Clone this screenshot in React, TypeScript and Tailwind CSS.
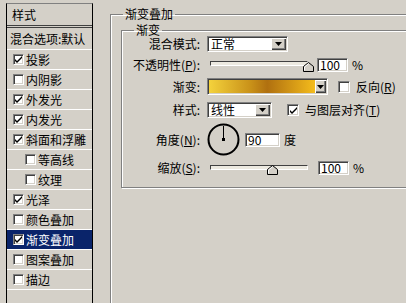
import React from "react";

const items = [
  { label: "投影", checked: true },
  { label: "内阴影", checked: false },
  { label: "外发光", checked: true },
  { label: "内发光", checked: true },
  { label: "斜面和浮雕", checked: true },
  { label: "等高线", checked: false, sub: true },
  { label: "纹理", checked: false, sub: true },
  { label: "光泽", checked: true },
  { label: "颜色叠加", checked: false },
  { label: "渐变叠加", checked: true, active: true },
  { label: "图案叠加", checked: false },
  { label: "描边", checked: false },
];

function Check({ checked, size = "w-[11px] h-[11px]" }: { checked: boolean; size?: string }) {
  return (
    <div
      className={`${size} shrink-0 bg-white border border-t-[#808080] border-l-[#808080] border-r-white border-b-white shadow-[inset_1px_1px_0_#404040,inset_-1px_-1px_0_#d4d0c8] flex items-center justify-center`}
    >
      {checked && (
        <svg width="7" height="7" viewBox="0 0 7 7">
          <path d="M0 3 L0 5 L2 7 L7 2 L7 0 L2 5 Z" fill="#000" />
        </svg>
      )}
    </div>
  );
}

function DropBtn({ w = "w-[15px]" }: { w?: string }) {
  return (
    <div className={`${w} h-full shrink-0 bg-[#d4d0c8] shadow-[inset_1px_1px_0_#fff,inset_-1px_-1px_0_#404040,inset_-2px_-2px_0_#808080] flex items-center justify-center`}>
      <svg width="7" height="4" viewBox="0 0 7 4">
        <path d="M0 0 H7 L3.5 4 Z" fill="#000" />
      </svg>
    </div>
  );
}

const sunken =
  "border border-t-[#808080] border-l-[#808080] border-r-white border-b-white shadow-[inset_1px_1px_0_#404040,inset_-1px_-1px_0_#d4d0c8]";

function Thumb() {
  return (
    <svg width="11" height="10" viewBox="0 0 11 10" className="absolute">
      <path d="M0.5 9.5 V4.5 L5.5 0.5 L10.5 4.5 V9.5 Z" fill="#d4d0c8" stroke="#000" />
      <path d="M1.5 8.5 V5 L5.5 1.8" fill="none" stroke="#fff" />
    </svg>
  );
}

function Label({ children }: { children: React.ReactNode }) {
  return <div className="w-[79px] shrink-0 text-right pr-[1px]">{children}</div>;
}

export default function App() {
  return (
    <div className="w-[406px] h-[303px] overflow-hidden bg-[#d4d0c8] flex text-[12px] leading-[14px] text-black font-['Noto_Sans_CJK_SC',sans-serif]">
      {/* styles list */}
      <div className="ml-[6px] mt-[3px] w-[87px] h-[310px] shrink-0 border-l border-r border-t border-l-black border-r-black border-t-[#808080]">
        <div className="h-[24px] border-b-[3px] border-double border-[#404040] flex items-center pl-[5px]">样式</div>
        <div className="h-[22px] border-b border-white flex items-center pl-[3px] whitespace-nowrap">混合选项:默认</div>
        {items.map((it) => (
          <div
            key={it.label}
            className={`h-[20px] border-b border-white flex items-center whitespace-nowrap ${it.sub ? "pl-[18px]" : "pl-[6px]"} ${it.active ? "bg-[#0a246a] text-white" : ""}`}
          >
            <Check checked={it.checked} />
            <span className="ml-[2px]">{it.label}</span>
          </div>
        ))}
      </div>

      {/* options */}
      <fieldset className="ml-[17px] mt-[7px] w-[320px] h-[320px] shrink-0 border border-[#808080] shadow-[inset_1px_1px_0_#fff,1px_1px_0_#fff]">
        <legend className="ml-[12px] px-[2px] h-[14px]">渐变叠加</legend>
        <fieldset className="ml-[10px] mt-[2px] w-[300px] pb-[12px] border border-[#808080] shadow-[inset_1px_1px_0_#fff,1px_1px_0_#fff]">
          <legend className="ml-[12px] px-[2px] h-[14px]">渐变</legend>

          <div className="mt-[-1px] h-[16px] flex items-center">
            <Label>混合模式:</Label>
            <div className={`ml-[6px] w-[81px] h-[16px] bg-white flex ${sunken} p-[1px]`}>
              <span className="flex-1 pl-[2px] leading-[12px]">正常</span>
              <DropBtn />
            </div>
          </div>

          <div className="mt-[6px] h-[14px] flex items-center">
            <Label>
              不透明性(<u>P</u>):
            </Label>
            <div className="ml-[9px] w-[104px] h-[14px] relative shrink-0">
              <div className="absolute left-0 top-[3px] w-[98px] h-[5px] border border-[#404040] border-b-white border-r-white bg-[#ece9e0]" />
              <div className="absolute left-[93px] top-[4px]">
                <Thumb />
              </div>
            </div>
            <div className={`ml-[3px] w-[31px] h-[14px] bg-white ${sunken} pl-[2px] leading-[12px]`}>100</div>
            <span className="ml-[4px]">%</span>
          </div>

          <div className="mt-[6px] h-[17px] flex items-center">
            <Label>渐变:</Label>
            <div className={`ml-[6px] w-[121px] h-[17px] flex ${sunken} p-[1px]`}>
              <div className="flex-1 bg-[linear-gradient(to_right,#f4d23c,#c89018_40%,#b07010_55%,#f4bc1c)]" />
              <DropBtn w="w-[11px]" />
            </div>
            <div className="ml-[10px]">
              <Check checked={false} size="w-[12px] h-[12px]" />
            </div>
            <span className="ml-[6px]">
              反向(<u>R</u>)
            </span>
          </div>

          <div className="mt-[7px] h-[16px] flex items-center">
            <Label>样式:</Label>
            <div className={`ml-[6px] w-[65px] h-[16px] bg-white flex ${sunken} p-[1px]`}>
              <span className="flex-1 pl-[2px] leading-[12px]">线性</span>
              <DropBtn />
            </div>
            <div className="ml-[15px]">
              <Check checked={true} size="w-[12px] h-[12px]" />
            </div>
            <span className="ml-[6px] whitespace-nowrap">
              与图层对齐(<u>T</u>)
            </span>
          </div>

          <div className="mt-[5px] h-[33px] flex items-center">
            <Label>
              角度(<u>N</u>):
            </Label>
            <svg width="33" height="33" viewBox="0 0 33 33" className="ml-[6px] shrink-0">
              <circle cx="16.5" cy="16.5" r="15" fill="none" stroke="#000" strokeWidth="2" />
              <line x1="16.5" y1="16.5" x2="16.5" y2="3" stroke="#000" strokeWidth="1" />
              <rect x="15" y="15" width="3" height="3" fill="#000" />
            </svg>
            <div className={`ml-[5px] w-[35px] h-[14px] bg-white ${sunken} pl-[2px] leading-[12px]`}>90</div>
            <span className="ml-[4px]">度</span>
          </div>

          <div className="mt-[4px] h-[15px] flex items-center">
            <Label>
              缩放(<u>S</u>):
            </Label>
            <div className="ml-[9px] w-[104px] h-[15px] relative shrink-0">
              <div className="absolute left-0 top-[5px] w-[98px] h-[5px] border border-[#404040] border-b-white border-r-white bg-[#ece9e0]" />
              <div className="absolute left-[57px] top-[5px]">
                <Thumb />
              </div>
            </div>
            <div className={`ml-[4px] w-[31px] h-[14px] bg-white ${sunken} pl-[2px] leading-[12px]`}>100</div>
            <span className="ml-[4px]">%</span>
          </div>
        </fieldset>
      </fieldset>
    </div>
  );
}
